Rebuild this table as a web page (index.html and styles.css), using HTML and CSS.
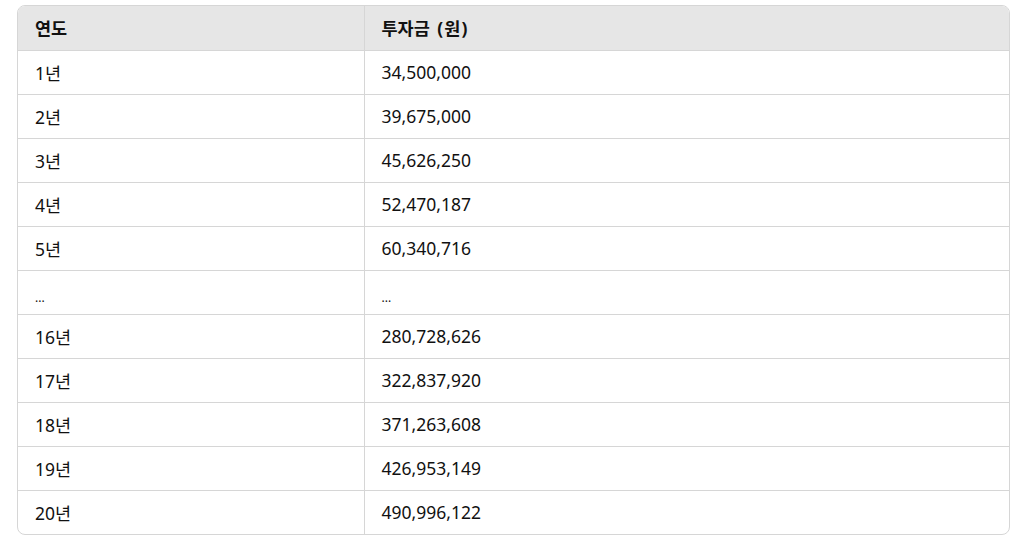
FILE: index.html
```html
<!DOCTYPE html>
<html lang="ko">
<head>
<meta charset="utf-8">
<link rel="stylesheet" href="styles.css">
</head>
<body>
<div class="wrap">
  <div class="table-box">
    <table class="data">
      <thead>
        <tr><th class="c1">연도</th><th>투자금 <span class="unit">(원)</span></th></tr>
      </thead>
      <tbody>
        <tr><td>1년</td><td>34,500,000</td></tr>
        <tr><td>2년</td><td>39,675,000</td></tr>
        <tr><td>3년</td><td>45,626,250</td></tr>
        <tr><td>4년</td><td>52,470,187</td></tr>
        <tr><td>5년</td><td>60,340,716</td></tr>
        <tr class="dots"><td>...</td><td>...</td></tr>
        <tr><td>16년</td><td>280,728,626</td></tr>
        <tr><td>17년</td><td>322,837,920</td></tr>
        <tr><td>18년</td><td>371,263,608</td></tr>
        <tr><td>19년</td><td>426,953,149</td></tr>
        <tr><td>20년</td><td>490,996,122</td></tr>
      </tbody>
    </table>
  </div>
</div>
</body>
</html>
```

FILE: styles.css
```css
html, body {
  margin: 0;
  padding: 0;
  background: #ffffff;
}
.wrap {
  padding: 5px 11px 0 17px;
}
.table-box {
  border: 1px solid #d6d6d6;
  border-radius: 8px;
  overflow: hidden;
}
.data {
  width: 100%;
  border-collapse: collapse;
  font-family: "Noto Sans", "Noto Sans CJK KR", sans-serif;
  font-size: 17.5px;
  color: #111111;
}
.data th, .data td {
  text-align: left;
  padding: 0 17px;
  height: 44px;
  box-sizing: border-box;
  border-right: 1px solid #d6d6d6;
  border-top: 1px solid #d6d6d6;
  white-space: nowrap;
}
.data th:last-child, .data td:last-child {
  border-right: none;
}
.data thead th {
  border-top: none;
  background: #e6e6e6;
  font-weight: 700;
  height: 44px;
}
.data .unit {
  margin-left: 3px;
  letter-spacing: 1px;
}
.data .c1 {
  width: 346px;
}
.data .dots td {
  font-size: 12px;
  vertical-align: bottom;
  padding-bottom: 8px;
}
```
